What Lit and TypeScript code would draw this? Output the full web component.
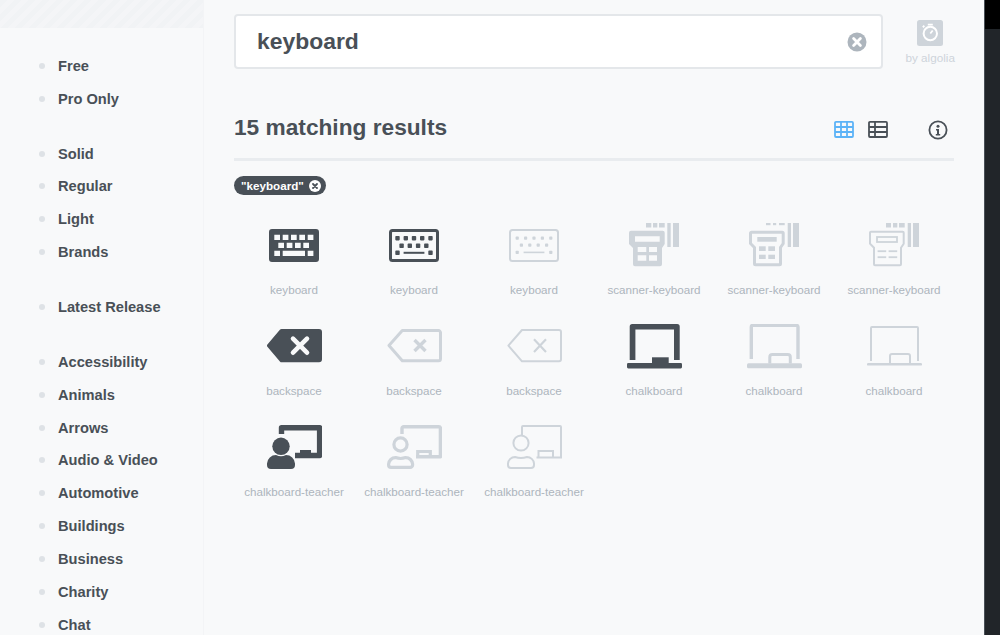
import { css, html, LitElement, svg, type TemplateResult } from 'lit';
import { customElement } from 'lit/decorators.js';

type Weight = 'solid' | 'regular' | 'light';

interface Result {
  name: string;
  weight: Weight;
  dark?: boolean;
  w: number;
  h: number;
  art: TemplateResult;
}

const SIDEBAR_GROUPS = [
  ['Free', 'Pro Only'],
  ['Solid', 'Regular', 'Light', 'Brands'],
  ['Latest Release'],
  ['Accessibility', 'Animals', 'Arrows', 'Audio & Video', 'Automotive', 'Buildings', 'Business', 'Charity', 'Chat'],
];

// key caps on the keyboard: x positions for each of the three rows
const keyRows = (size: number, top: number, xs: number[]) =>
  xs.map((x) => svg`<rect x=${x} y=${top} width=${size} height=${size} rx="0.8" />`);

const keyboardSolid = svg`
  <path fill-rule="evenodd" d="M3 0H47a3 3 0 0 1 3 3V30a3 3 0 0 1-3 3H3a3 3 0 0 1-3-3V3a3 3 0 0 1 3-3Z
    M5.3 5.7v5.4h5.7V5.7Z M13.7 5.7v5.4h5.7V5.7Z M22 5.7v5.4h5.7V5.7Z M30.3 5.7v5.4h5.7V5.7Z M38.7 5.7v5.4h5.7V5.7Z
    M9.3 13.7v5.4h5.7v-5.4Z M17.7 13.7v5.4h5.7v-5.4Z M26 13.7v5.4h5.7v-5.4Z M34.3 13.7v5.4h5.7v-5.4Z
    M5.3 21.7v5.4h5.7v-5.4Z M13.7 21.7v5.4H36v-5.4Z M38.7 21.7v5.4h5.7v-5.4Z" />
`;

const keyboardRegular = svg`
  <rect x="1.5" y="1.5" width="47" height="30" rx="2" fill="none" stroke="currentColor" stroke-width="3" />
  ${keyRows(4.4, 7, [6.3, 14.6, 22.8, 31, 39.3])}
  ${keyRows(4.4, 14.6, [10.4, 18.6, 26.9, 35.1])}
  ${keyRows(4.4, 21.6, [6.3, 39.3])}
  <rect x="14.6" y="22.8" width="20.8" height="2" />
`;

const keyboardLight = svg`
  <rect x="1" y="1" width="48" height="31" rx="2.5" fill="none" stroke="currentColor" stroke-width="2" />
  ${keyRows(3.2, 7.6, [6.6, 15, 23.4, 31.8, 40.2])}
  ${keyRows(3.2, 14.6, [10.8, 19.2, 27.6, 36])}
  ${keyRows(3.2, 21.8, [6.6, 40.2])}
  <rect x="14.6" y="22.6" width="20.8" height="1.6" />
`;

const scannerBars = (bits: [number, number][], h: number) =>
  bits.map(([x, w]) => svg`<rect x=${x} y="0" width=${w} height=${h} />`);

const scannerOutline = 'M2 7.7H33.7a2 2 0 0 1 2 2V21l-2.7 4V41.3a2 2 0 0 1-2 2H6a2 2 0 0 1-2-2V25L0 21V9.7a2 2 0 0 1 2-2Z';

const scannerSolid = svg`
  <path fill-rule="evenodd" d="${scannerOutline}
    M6 13.3V18.7H30.7V13.3Z M8.7 24v5h8.6v-5Z M20 24v5h8v-5Z M8.7 32.3v5.4h8.6v-5.4Z M20 32.3v5.4h8v-5.4Z" />
  ${scannerBars([[17, 5.3], [24, 4.3], [30, 5.7]], 4.5)}
  ${scannerBars([[38.3, 3.4], [44, 6]], 24)}
`;

const scannerRegular = svg`
  <path d="M2.5 9.2H33.2a1 1 0 0 1 1 1V20.5l-2.7 4V40.8a1 1 0 0 1-1 1H6.5a1 1 0 0 1-1-1V24.5L1.5 20.5V10.2a1 1 0 0 1 1-1Z"
    fill="none" stroke="currentColor" stroke-width="3" />
  <rect x="8.3" y="14" width="19.4" height="4.7" />
  <rect x="10" y="23.3" width="6.7" height="4.7" />
  <rect x="19.3" y="23.3" width="6.7" height="4.7" />
  <rect x="10" y="31.7" width="6.7" height="4.3" />
  <rect x="19.3" y="31.7" width="6.7" height="4.3" />
  ${scannerBars([[17, 4.5], [24, 3.2], [30, 5.7]], 2.2)}
  ${scannerBars([[38.7, 3.3], [44, 6]], 24)}
`;

const scannerLight = svg`
  <path d="M2 8.7H33.7a1 1 0 0 1 1 1V20.7l-2.7 4V41.3a1 1 0 0 1-1 1H6a1 1 0 0 1-1-1V24.7L1 20.7V9.7a1 1 0 0 1 1-1Z"
    fill="none" stroke="currentColor" stroke-width="2" />
  <rect x="8" y="14" width="20" height="5" fill="none" stroke="currentColor" stroke-width="1.8" />
  <rect x="8.6" y="27.3" width="8.6" height="1.8" />
  <rect x="19.6" y="27.3" width="8.6" height="1.8" />
  <rect x="8.6" y="33.3" width="8.6" height="1.8" />
  <rect x="19.6" y="33.3" width="8.6" height="1.8" />
  ${scannerBars([[17, 5], [24, 4.3], [30, 5.7]], 4.5)}
  ${scannerBars([[38.7, 3.3], [44, 6]], 24)}
`;

const backspaceSolid = svg`
  <path d="M14.5 0H52a3 3 0 0 1 3 3V30.3a3 3 0 0 1-3 3H14.5a2 2 0 0 1-1.4-.6L.6 18a2 2 0 0 1 0-2.7L13.1.6A2 2 0 0 1 14.5 0Z" />
  <path d="M26 9.7L40 23.7M40 9.7L26 23.7" stroke="#f8f9fa" stroke-width="4.6" stroke-linecap="round" />
`;

const backspaceRegular = svg`
  <path d="M15.3 1.6H51.5a2 2 0 0 1 2 2V29.7a2 2 0 0 1-2 2H15.3L2 16.6Z" fill="none" stroke="currentColor" stroke-width="3" stroke-linejoin="round" />
  <path d="M27.5 11l11 11M38.5 11l-11 11" fill="none" stroke="currentColor" stroke-width="3.4" />
`;

const backspaceLight = svg`
  <path d="M15 1H52a2 2 0 0 1 2 2V30.3a2 2 0 0 1-2 2H15L1.4 16.6Z" fill="none" stroke="currentColor" stroke-width="2" stroke-linejoin="round" />
  <path d="M27 10.3l12 12.6M39 10.3L27 22.9" fill="none" stroke="currentColor" stroke-width="2.2" />
`;

const chalkboardSolid = svg`
  <path d="M2.7 36V2.5A2.5 2.5 0 0 1 5.2 0H50.2a2.5 2.5 0 0 1 2.5 2.5V36H47V5.4H8.4V36Z" />
  <rect x="25" y="33.3" width="16.7" height="7" />
  <rect x="0" y="39" width="55" height="5.4" rx="1.3" />
`;

const chalkboardRegular = svg`
  <path d="M4.3 35V3a1.8 1.8 0 0 1 1.8-1.8H49.2A1.8 1.8 0 0 1 51 3V35" fill="none" stroke="currentColor" stroke-width="3.4" />
  <path d="M23 40V33.5a2.5 2.5 0 0 1 2.5-2.5H41a2.5 2.5 0 0 1 2.5 2.5V40" fill="none" stroke="currentColor" stroke-width="3" transform="translate(-.2 -.5)" />
  <rect x="0" y="39.2" width="55" height="5" rx="1.5" />
`;

const chalkboardLight = svg`
  <path d="M4 37V4a1 1 0 0 1 1-1H50a1 1 0 0 1 1 1V37" fill="none" stroke="currentColor" stroke-width="2" />
  <path d="M23 40V32a2 2 0 0 1 2-2H41a2 2 0 0 1 2 2V40" fill="none" stroke="currentColor" stroke-width="2" />
  <rect x="0" y="39" width="55" height="2.6" rx="1.2" />
`;

const teacherSolid = svg`
  <path d="M14.5 9V2.7H52.6V30.5H28" fill="none" stroke="currentColor" stroke-width="5.4" stroke-linejoin="round" />
  <rect x="33" y="25" width="11" height="6" />
  <circle cx="14" cy="21.3" r="8.7" />
  <path d="M0 38.5a9 9 0 0 1 9-8.5q5 2.4 10 0a9 9 0 0 1 9 8.5V40a4 4 0 0 1-4 4H4a4 4 0 0 1-4-4Z" />
`;

const teacherRegular = svg`
  <path d="M15 9V3.400a1.700 1.700 0 0 1 1.700-1.700H51.700a1.700 1.700 0 0 1 1.700 1.700V31.700H29" fill="none" stroke="currentColor" stroke-width="3.4" stroke-linejoin="round" />
  <path d="M30.7 31V26.5H43.3V31" fill="none" stroke="currentColor" stroke-width="3.2" />
  <circle cx="13.5" cy="19.5" r="6.6" fill="none" stroke="currentColor" stroke-width="3.2" />
  <path d="M1.6 39.2a7 7 0 0 1 7-6.6q5 1.8 10 0a7 7 0 0 1 7 6.6V40a2.4 2.4 0 0 1-2.4 2.4H4a2.4 2.4 0 0 1-2.4-2.4Z"
    fill="none" stroke="currentColor" stroke-width="3.2" />
`;

const teacherLight = svg`
  <path d="M15 10V2a1 1 0 0 1 1-1H53a1 1 0 0 1 1 1V32.500H29.500" fill="none" stroke="currentColor" stroke-width="2" />
  <path d="M31.500 32V26H46V32" fill="none" stroke="currentColor" stroke-width="2" />
  <circle cx="14" cy="18" r="7.6" fill="none" stroke="currentColor" stroke-width="2" />
  <path d="M1 38.500a7 7 0 0 1 7-6.500q6 2 12 0a7 7 0 0 1 7 6.500V40a3 3 0 0 1-3 3H4a3 3 0 0 1-3-3Z"
    fill="none" stroke="currentColor" stroke-width="2" />
`;

const RESULTS: Result[] = [
  { name: 'keyboard', weight: 'solid', dark: true, w: 50, h: 33, art: keyboardSolid },
  { name: 'keyboard', weight: 'regular', dark: true, w: 50, h: 33, art: keyboardRegular },
  { name: 'keyboard', weight: 'light', w: 50, h: 33, art: keyboardLight },
  { name: 'scanner-keyboard', weight: 'solid', w: 50, h: 44, art: scannerSolid },
  { name: 'scanner-keyboard', weight: 'regular', w: 50, h: 44, art: scannerRegular },
  { name: 'scanner-keyboard', weight: 'light', w: 50, h: 44, art: scannerLight },
  { name: 'backspace', weight: 'solid', dark: true, w: 55, h: 34, art: backspaceSolid },
  { name: 'backspace', weight: 'regular', w: 55, h: 34, art: backspaceRegular },
  { name: 'backspace', weight: 'light', w: 55, h: 34, art: backspaceLight },
  { name: 'chalkboard', weight: 'solid', dark: true, w: 55, h: 45, art: chalkboardSolid },
  { name: 'chalkboard', weight: 'regular', w: 55, h: 45, art: chalkboardRegular },
  { name: 'chalkboard', weight: 'light', w: 55, h: 45, art: chalkboardLight },
  { name: 'chalkboard-teacher', weight: 'solid', dark: true, w: 55, h: 44, art: teacherSolid },
  { name: 'chalkboard-teacher', weight: 'regular', w: 55, h: 44, art: teacherRegular },
  { name: 'chalkboard-teacher', weight: 'light', w: 55, h: 44, art: teacherLight },
];

@customElement('app-root')
export class AppRoot extends LitElement {
  static override styles = css`
    :host {
      display: flex;
      width: 1000px;
      height: 635px;
      overflow: hidden;
      background: #f8f9fa;
      color: #495057;
      font-family: 'Liberation Sans', Arial, sans-serif;
    }

    .sidebar {
      flex: 0 0 203px;
      border-right: 1px solid #f3f4f6;
      overflow: hidden;
    }

    .stripes {
      height: 28px;
      background: repeating-linear-gradient(
        135deg,
        #f1f3f5 0 5px,
        #f4f5f7 5px 10px
      );
    }

    .group {
      list-style: none;
      margin: 0 0 22px;
      padding: 0 0 0 39px;
    }

    .stripes + .group {
      margin-top: 21.5px;
    }

    .group li {
      display: flex;
      align-items: center;
      gap: 13px;
      height: 32.85px;
      font-size: 14.65px;
      font-weight: 700;
      white-space: nowrap;
    }

    .group li::before {
      content: '';
      width: 6px;
      height: 6px;
      border-radius: 50%;
      background: #dee2e6;
    }

    .main {
      flex: 1;
      min-width: 0;
      padding: 14px 30px 0;
    }

    .search-row {
      display: flex;
      align-items: flex-start;
    }

    .search {
      flex: 0 0 649px;
      box-sizing: border-box;
      height: 55px;
      display: flex;
      align-items: center;
      justify-content: space-between;
      padding: 0 14px 0 21px;
      background: #fff;
      border: 2px solid #e4e7ea;
      border-radius: 4px;
      font-size: 22.9px;
      font-weight: 700;
    }

    .algolia {
      margin: 6px 0 0 22.5px;
      display: flex;
      flex-direction: column;
      align-items: center;
      gap: 5px;
      color: #ced4da;
      font-size: 11.7px;
      white-space: nowrap;
    }

    .heading {
      display: flex;
      align-items: center;
      height: 61px;
      padding-top: 28px;
      border-bottom: 3px solid #e9ecef;
    }

    h2 {
      margin: 0 auto 0 0;
      font-size: 22.7px;
      font-weight: 700;
    }

    .views {
      display: flex;
      align-items: center;
      margin: 4px 6px 0 0;
    }

    .views svg {
      display: block;
    }

    .view-table {
      margin-left: 14px;
    }

    .view-info {
      margin-left: 40px;
    }

    .tag {
      display: inline-flex;
      align-items: center;
      gap: 5px;
      height: 19px;
      margin-top: 15px;
      padding: 0 5px 0 7px;
      border-radius: 10px;
      background: #495057;
      color: #fff;
      font-size: 11.65px;
      font-weight: 700;
      vertical-align: top;
    }

    .grid {
      display: grid;
      grid-template-columns: repeat(6, 120px);
      grid-auto-rows: 101px;
      margin-top: 26px;
    }

    .cell {
      display: flex;
      flex-direction: column;
      align-items: center;
      color: #adb5bd;
      font-size: 11.65px;
      white-space: nowrap;
    }

    .art {
      display: flex;
      align-items: center;
      justify-content: center;
      height: 48px;
      margin-bottom: 14px;
      color: #ced4da;
    }

    .art.dark {
      color: #495057;
    }

    .art svg {
      display: block;
      fill: currentColor;
    }

    .label {
      line-height: 14px;
    }

    .rail {
      flex: 0 0 15px;
      border-left: 1px solid #495057;
      display: flex;
      flex-direction: column;
    }

    .rail-top {
      height: 29px;
      background: #000;
    }

    .rail-bottom {
      flex: 1;
      background: #212529;
    }
  `;

  private renderResult(r: Result) {
    return html`
      <div class="cell">
        <div class="art ${r.dark ? 'dark' : ''}">
          <svg width=${r.w} height=${r.h} viewBox="0 0 ${r.w} ${r.h}">${r.art}</svg>
        </div>
        <span class="label">${r.name}</span>
      </div>
    `;
  }

  override render() {
    return html`
      <aside class="sidebar">
        <div class="stripes"></div>
        ${SIDEBAR_GROUPS.map(
          (items) => html`<ul class="group">${items.map((item) => html`<li>${item}</li>`)}</ul>`
        )}
      </aside>

      <main class="main">
        <div class="search-row">
          <div class="search">
            <span>keyboard</span>
            <svg width="20" height="20" viewBox="0 0 20 20">
              <circle cx="10" cy="10" r="9.5" fill="#adb5bd" />
              <path d="M6.6 6.6l6.8 6.8M13.4 6.6l-6.8 6.8" stroke="#fff" stroke-width="2.8" stroke-linecap="round" />
            </svg>
          </div>
          <div class="algolia">
            <svg width="26" height="26" viewBox="0 0 26 26">
              <rect width="26" height="26" rx="2.5" fill="#ced4da" />
              <circle cx="13.3" cy="13.5" r="6.7" fill="none" stroke="#fff" stroke-width="2" />
              <path d="M10.8 4.6h5M13.3 13.5l2.4-3M5.8 7.2l1.6-1.4" stroke="#fff" stroke-width="1.8" fill="none" />
            </svg>
            <span>by algolia</span>
          </div>
        </div>

        <div class="heading">
          <h2>15 matching results</h2>
          <div class="views">
            <svg width="20" height="17" viewBox="0 0 20 17">
              <path d="M2 .9H18a1 1 0 0 1 1 1V15a1 1 0 0 1-1 1H2a1 1 0 0 1-1-1V1.900a1 1 0 0 1 1-1Z M7 1V16 M13 1V16 M1 6H19 M1 11H19"
                fill="none" stroke="#5cb3f7" stroke-width="1.8" />
            </svg>
            <svg class="view-table" width="20" height="17" viewBox="0 0 20 17">
              <path d="M2 .9H18a1 1 0 0 1 1 1V15a1 1 0 0 1-1 1H2a1 1 0 0 1-1-1V1.900a1 1 0 0 1 1-1Z M7 1V16 M1 6H19 M1 11H19"
                fill="none" stroke="#495057" stroke-width="1.8" />
            </svg>
            <svg class="view-info" width="20" height="20" viewBox="0 0 20 20">
              <circle cx="10" cy="10" r="8.6" fill="none" stroke="#495057" stroke-width="1.8" />
              <circle cx="10" cy="6.2" r="1.5" fill="#495057" />
              <path d="M8 9H11V14H12.2V15.4H7.8V14H9V10.4H8Z" fill="#495057" />
            </svg>
          </div>
        </div>

        <div class="tag">
          <span>"keyboard"</span>
          <svg width="12" height="12" viewBox="0 0 12 12">
            <circle cx="6" cy="6" r="6" fill="#fff" />
            <path d="M4 4l4 4M8 4l-4 4" stroke="#495057" stroke-width="1.8" stroke-linecap="round" />
          </svg>
        </div>

        <div class="grid">${RESULTS.map((r) => this.renderResult(r))}</div>
      </main>

      <div class="rail">
        <div class="rail-top"></div>
        <div class="rail-bottom"></div>
      </div>
    `;
  }
}
